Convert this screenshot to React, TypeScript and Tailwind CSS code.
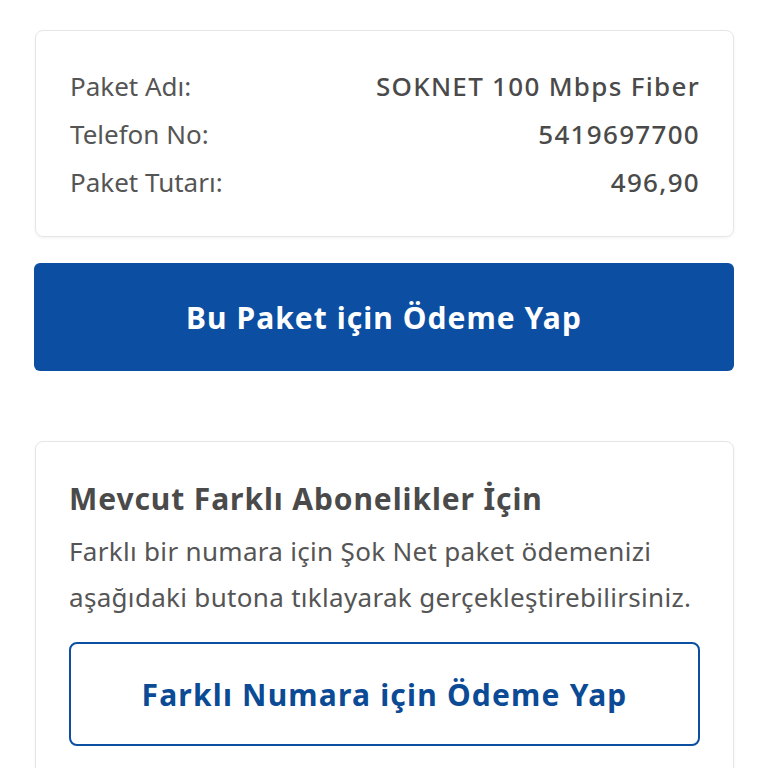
import React from 'react'

const rows = [
  { label: 'Paket Adı:', value: 'SOKNET 100 Mbps Fiber' },
  { label: 'Telefon No:', value: '5419697700' },
  { label: 'Paket Tutarı:', value: '496,90' },
]

const App = () => {
  return (
    <div className="h-[768px] overflow-hidden bg-white px-[34px] pt-[30px] font-['Noto_Sans','Lato',sans-serif] text-[#555555]">
      <div className="ml-px rounded-lg border border-[#e6e6e6] shadow-[0_1px_3px_rgba(0,0,0,0.06)] pl-[34px] pr-[33px] pt-[31px] pb-[30px]">
        {rows.map((r) => (
          <div key={r.label} className="flex items-center justify-between h-[48px] text-[26px]">
            <span>{r.label}</span>
            <span className="font-medium tracking-[0.05em] text-[#4a4a4a]">{r.value}</span>
          </div>
        ))}
      </div>

      <button className="mt-[26px] w-full h-[108px] rounded-md bg-[#0b4ea2] text-white text-[30px] font-bold tracking-[0.035em]">
        Bu Paket için Ödeme Yap
      </button>

      <div className="mt-[70px] ml-px rounded-lg border border-[#e6e6e6] shadow-[0_1px_3px_rgba(0,0,0,0.06)] px-[33px] pt-[36px] pb-[40px]">
        <h2 className="text-[30px] font-bold tracking-[0.03em] text-[#4a4a4a] leading-[42px]">Mevcut Farklı Abonelikler İçin</h2>
        <p className="mt-[8px] text-[26px] tracking-[0.012em] leading-[46px]">
          Farklı bir numara için Şok Net paket ödemenizi aşağıdaki butona tıklayarak gerçekleştirebilirsiniz.
        </p>
        <button className="mt-[22px] w-full h-[104px] rounded-lg border-2 border-[#0b4ea2] text-[#0b4a95] text-[30px] font-bold tracking-[0.04em] bg-white">
          Farklı Numara için Ödeme Yap
        </button>
      </div>
    </div>
  )
}

export default App
